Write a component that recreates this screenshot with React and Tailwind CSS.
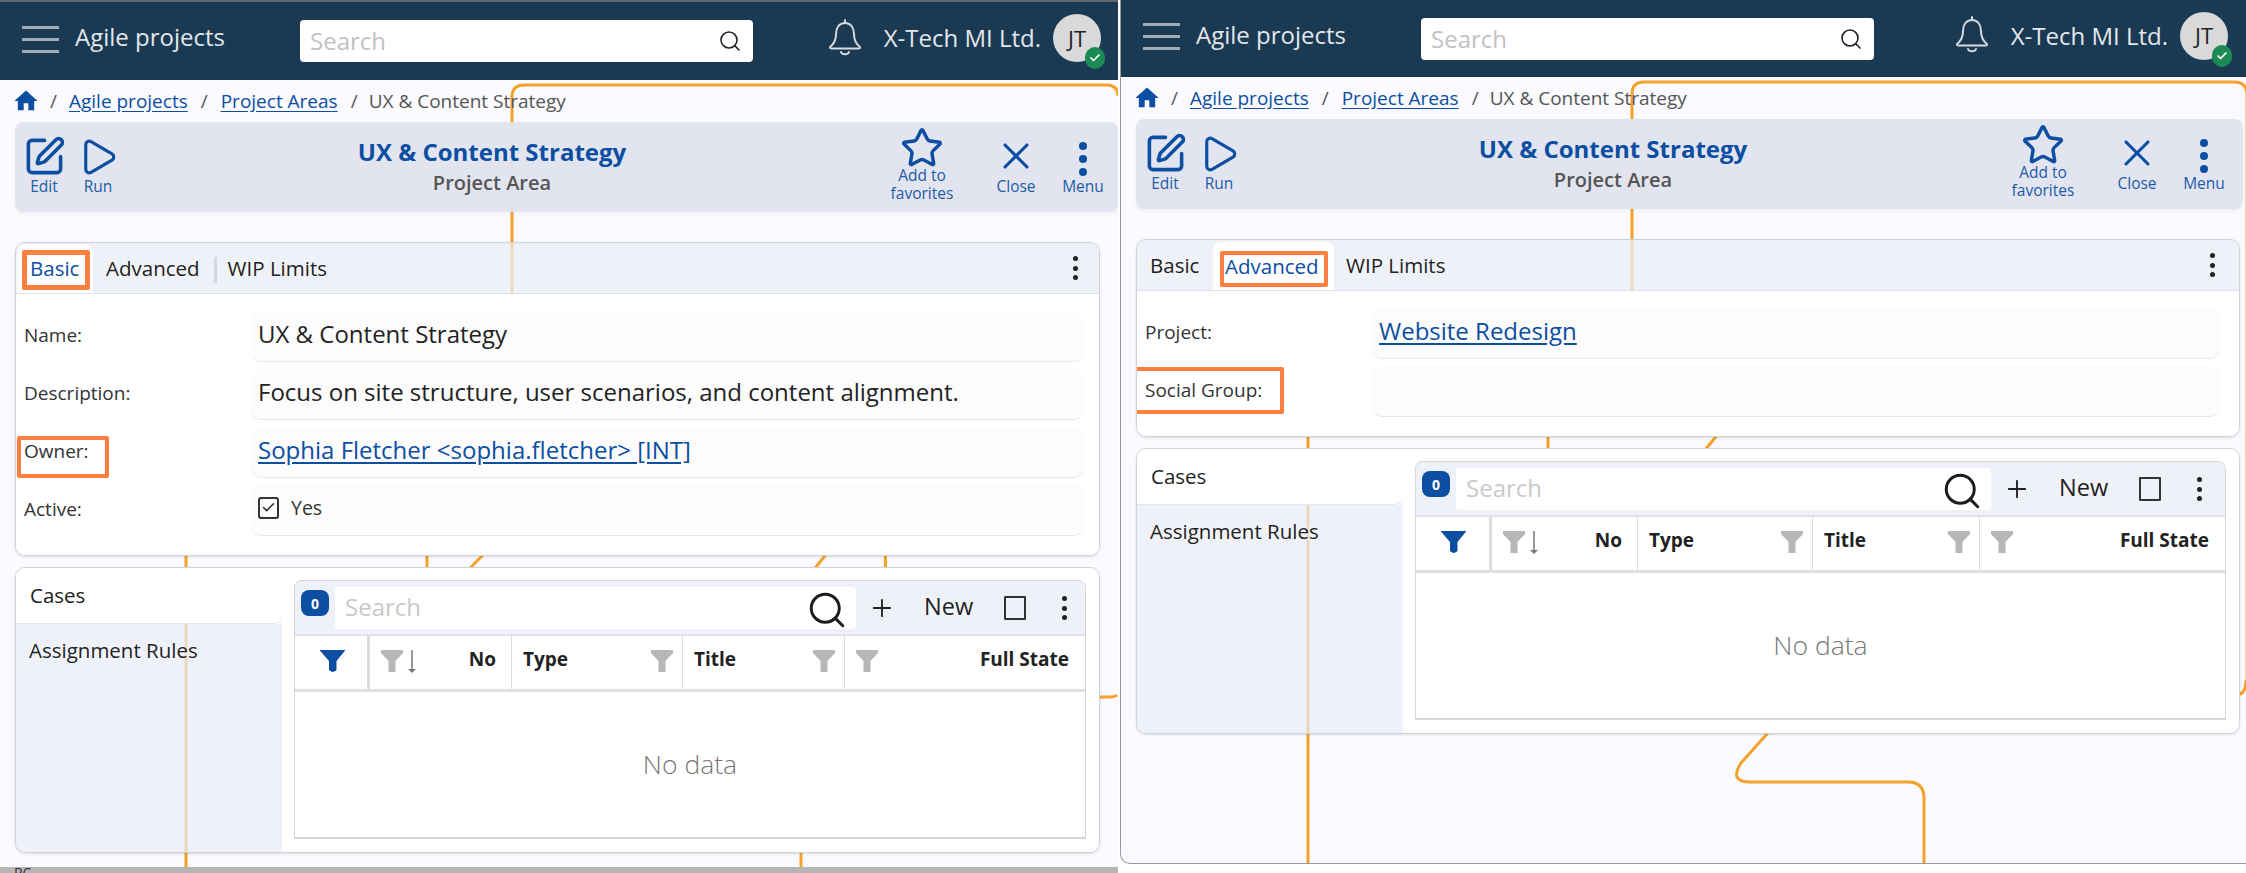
import React from "react";
import { Search, Play, Star, X, Plus, Check, SquarePen } from "lucide-react";
import { MdHome } from "react-icons/md";

const BellIcon = () => (
  <svg width="34" height="37" viewBox="0 0 34 37" fill="none" stroke="#d5dade" strokeWidth="2" strokeLinecap="round" strokeLinejoin="round">
    <path d="M17 1v3M17 4c-6 0-9 5-9 11 0 7-2 10-6 13 0 1 .5 1.500 1.500 1.500h27c1 0 1.500-.5 1.500-1.500-4-3-6-6-6-13 0-6-3-11-9-11z" />
    <path d="M13 33c1 3 7 3 8 0" />
  </svg>
);

const Funnel = ({ color = "#b7b7b7" }) => (
  <svg width="22" height="22" viewBox="0 0 22 22" className="shrink-0">
    <path d="M0 0H22V3L14.500 11V22H7.500V11L0 3Z" fill={color} />
  </svg>
);

const BlueFunnel = () => (
  <svg width="25" height="22" viewBox="0 0 25 22" className="shrink-0">
    <path d="M0 0H25L16 11V20Q12.500 23 9.500 20V11Z" fill="#0b4ea2" stroke="#0b4ea2" strokeLinejoin="round" />
  </svg>
);

const SortArrow = () => (
  <svg width="10" height="24" viewBox="0 0 10 24" className="shrink-0">
    <path d="M5 0V20" stroke="#777" strokeWidth="1.500" />
    <path d="M1 19H9L5 23Z" fill="#777" />
  </svg>
);

const Dots = ({ size = 5, gap = 5, color = "#222" }) => (
  <div className="flex flex-col items-center" style={{ gap }}>
    <span className="rounded-full" style={{ width: size, height: size, background: color }} />
    <span className="rounded-full" style={{ width: size, height: size, background: color }} />
    <span className="rounded-full" style={{ width: size, height: size, background: color }} />
  </div>
);

const Action = ({ icon, label, className, labelClass = "-mt-[1px]" }) => (
  <div className={"flex flex-col items-center text-[15.500px] leading-[18px] text-[#1d5aa8] " + className}>
    <div className="h-[50px] flex items-end justify-center">{icon}</div>
    <div className={"text-center whitespace-pre-line " + labelClass}>{label}</div>
  </div>
);

const Header = ({ h, pr }) => (
  <div className={"relative z-20 shrink-0 flex items-center bg-[#1a3a54] " + h + " " + pr}>
    <div className="ml-[22px] mb-[4px] w-[37px] flex flex-col gap-[9px]">
      <span className="h-[3px] bg-[#a1abb5]" />
      <span className="h-[3px] bg-[#a1abb5]" />
      <span className="h-[3px] bg-[#a1abb5]" />
    </div>
    <div className="ml-[16px] mb-[8px] w-[225px] text-[24px] text-[#e3e7ea]">Agile projects</div>
    <div className="w-[453px] h-[42px] bg-white rounded-[4px] flex items-center pl-[10px] pr-[11px]">
      <span className="flex-1 text-[24px] text-[#c2c2c2]">Search</span>
      <Search size={24} strokeWidth={1.600} color="#222" />
    </div>
    <div className="ml-auto flex items-center">
      <span className="mb-[8px]"><BellIcon /></span>
      <span className="ml-[22px] mb-[6px] text-[24px] text-[#e3e7ea]">X-Tech MI Ltd.</span>
      <div className="relative ml-[12px] mb-[6px] w-[48px] h-[48px] rounded-full bg-[#d9d9d9] flex items-center justify-center text-[22px] text-[#222]">
        JT
        <span className="absolute right-[-4px] bottom-[-7px] w-[20px] h-[22px] rounded-full bg-[#1c8a55] flex items-center justify-center">
          <Check size={12} strokeWidth={3.500} color="#fff" />
        </span>
      </div>
    </div>
  </div>
);

const Toolbar = ({ pr }) => (
  <div className="ml-[15px] h-[90px] flex bg-[#e0e4ef]/95 rounded-[8px] shadow-[0_2px_4px_rgba(0,0,0,0.05)]">
    <div className="w-[100px] shrink-0 flex pl-[11px] gap-[21px] pt-[6px]">
      <Action className="w-[36px]" icon={<SquarePen size={43} strokeWidth={2} color="#0b4ea2" />} label="Edit" />
      <Action className="w-[30px]" icon={<Play size={42} strokeWidth={1.800} color="#0b4ea2" />} label="Run" />
    </div>
    <div className="w-[754px] shrink-0 flex flex-col items-center pt-[14px]">
      <div className="text-[24px] leading-[32px] font-bold text-[#0b4ea2]">UX &amp; Content Strategy</div>
      <div className="text-[20px] leading-[28px] mt-[1px] font-semibold text-[#555]">Project Area</div>
    </div>
    <div className={"ml-auto flex pt-[2px] " + pr}>
      <Action className="w-[72px] -mt-[4px]" labelClass="-mt-[4px]" icon={<Star size={44} strokeWidth={1.900} color="#0b4ea2" />} label={"Add to\nfavorites"} />
      <Action className="w-[52px] ml-[32px] pt-[4px]" icon={<X size={44} strokeWidth={1.700} color="#0b4ea2" />} label="Close" />
      <Action className="w-[50px] ml-[16px] pt-[4px]" icon={<div className="pb-[2px]"><Dots size={8} gap={5} color="#0b4ea2" /></div>} label="Menu" />
    </div>
  </div>
);

const Field = ({ label, children, overlay }) => (
  <div className="flex h-[51px]">
    <div className="relative w-[235px] shrink-0 pl-[8px] flex items-center text-[19px] text-[#333]">
      <span className="mb-[2px]">{label}</span>
      {overlay}
    </div>
    <div className="flex-1 pl-[7px] pb-[5px] flex items-center bg-[#fcfcfd] rounded-[10px] border-b-[1.500px] border-[#e4e7ee] text-[24px] text-[#222]">
      {children}
    </div>
  </div>
);

const Link = ({ children, className = "" }) => (
  <a className={"text-[#0b4ea2] underline underline-offset-[3px] " + className}>{children}</a>
);

const HeadCell = ({ width, children, className = "", border = "border-r-[1.500px]" }) => (
  <div className={"h-full flex items-start pt-[14px] border-[#dcdcdc] " + border + " " + className} style={{ width }}>
    {children}
  </div>
);

const CasesPanel = ({ cols, width, toolsW }) => (
  <div className={"ml-[15px] mt-[11px] h-[286px] flex rounded-[10px] border border-[#cfd2d6] overflow-hidden shadow-[0_1px_3px_rgba(0,0,0,0.12)] " + width}>
    <div className="w-[266px] shrink-0 flex flex-col">
      <div className="h-[56px] shrink-0 bg-white rounded-br-[8px] border-b border-[#e3e6ee] pl-[14px] flex items-center text-[20.500px] text-[#222]">Cases</div>
      <div className="flex-1 bg-[#e8ecf6]/70 pl-[13px] pt-[11px] text-[20.500px] text-[#222] [text-shadow:0_0_8px_#fff]">Assignment Rules</div>
    </div>
    <div className="flex-1 bg-white pl-[12px] pr-[13px] pt-[12px] pb-[13px]">
      <div className="h-full flex flex-col border border-[#d6d6d6] border-b-[2px] rounded-t-[8px] overflow-hidden">
        <div className="h-[55px] shrink-0 bg-[#eef1f8] border-b-[2px] border-[#dfe2e8] flex items-start">
          <span className="ml-[6px] mt-[9px] w-[28px] h-[26px] rounded-[8px] bg-[#0b4ea2] text-white text-[14px] font-bold flex items-center justify-center">0</span>
          <div className="ml-[6px] mt-[6px] flex-1 h-[42px] bg-white rounded-[4px] flex items-center pl-[10px] pr-[8px] text-[24px] text-[#c9c9c9]">
            <span className="flex-1 pb-[3px]">Search</span>
            <Search size={42} strokeWidth={1.700} color="#1c1c1c" className="-mb-[4px]" />
          </div>
          <div className={"shrink-0 flex items-center h-[42px] mt-[6px] pl-[12px] text-[#222] " + toolsW}>
            <Plus size={28} strokeWidth={1.600} />
            <span className="ml-[28px] pb-[3px] text-[23.500px] [text-shadow:0_0_6px_#fff]">New</span>
            <span className="ml-[31px] w-[22px] h-[24px] border-[2px] border-[#333] rounded-[1px]" />
            <span className="ml-[36px]"><Dots size={5} gap={4.500} /></span>
          </div>
        </div>
        <div className="h-[56px] shrink-0 flex border-b-[3px] border-[#dfdfdf] text-[19px] font-bold text-[#222]">
          <HeadCell width={cols[0]} border="border-r-[3px]" className="pl-[25px]"><BlueFunnel /></HeadCell>
          <HeadCell width={cols[1]} className="pl-[11px]">
            <Funnel />
            <span className="ml-[4px]"><SortArrow /></span>
            <span className="ml-auto pr-[15px] leading-[18px]">No</span>
          </HeadCell>
          <HeadCell width={cols[2]} className="pl-[11px] pr-[9px] justify-between">
            <span className="leading-[18px]">Type</span>
            <Funnel />
          </HeadCell>
          <HeadCell width={cols[3]} className="pl-[11px] pr-[9px] justify-between">
            <span className="leading-[18px]">Title</span>
            <Funnel />
          </HeadCell>
          <HeadCell width="auto" border="" className="flex-1 pl-[11px] pr-[16px] justify-between">
            <Funnel />
            <span className="leading-[18px]">Full State</span>
          </HeadCell>
        </div>
        <div className="flex-1 flex items-center justify-center text-[26.500px] font-light text-[#777]">No data</div>
      </div>
    </div>
  </div>
);

const TabBar = ({ children, dots }) => (
  <div className="h-[51px] flex bg-[#e9edf6]/75 border-b border-[#dde0e7] text-[20.500px] text-[#222]">
    <div className="flex-1 flex items-stretch">{children}</div>
    <div className={"flex items-center justify-center [text-shadow:0_0_6px_#fff] " + dots}><Dots size={5} gap={4.500} /></div>
  </div>
);

const Background = ({ className, viewW, paths }) => (
  <svg className={"absolute top-0 pointer-events-none " + className} viewBox={`0 0 ${viewW} 873`} fill="none" stroke="#f4a22a" strokeWidth="3" strokeLinejoin="round">
    {paths.map((d) => <path key={d} d={d} />)}
  </svg>
);

const Breadcrumb = () => (
  <div className="h-[42px] shrink-0 pl-[12px] flex items-center text-[19px] text-[#555]">
    <MdHome size={28} color="#0b4ea2" />
    <span className="ml-[10px]">/</span>
    <Link className="ml-[12px]">Agile projects</Link>
    <span className="ml-[13px]">/</span>
    <Link className="ml-[13px]">Project Areas</Link>
    <span className="ml-[13px]">/</span>
    <span className="ml-[11px]">UX &amp; Content Strategy</span>
  </div>
);

const Highlight = ({ className }) => (
  <span className={"absolute pointer-events-none border-[#ff7f40] rounded-[2px] " + className} />
);

export default function App() {
  return (
    <div className="relative w-[2246px] h-[873px] bg-white overflow-hidden flex [font-family:'Open_Sans',sans-serif]">
      {/* left screenshot */}
      <div className="w-[1120px] shrink-0 h-[873px] flex flex-col">
        <div className="h-[2px] bg-[#5f676d] w-[1118px]" />
        <div className="relative w-[1118px] h-[865px] flex flex-col overflow-hidden bg-[#fafaff] rounded-bl-[10px]">
          <Header h="h-[78px]" pr="pr-[17px]" />
          <div className="relative flex-1 flex flex-col">
            <Background
              className="left-0 -mt-[80px] w-[1118px] h-[873px]"
              viewW={1118}
              paths={[
                "M1118 96Q1118 85 1106 85H524Q512 85 512 97V294",
                "M186 550V873",
                "M427 550V575",
                "M484 554L466 572",
                "M828 552L812 572",
                "M885.500 550V572",
                "M801 845V873",
                "M1098 697H1110Q1115 697 1117 695",
              ]}
            />
            <div className="relative z-10 flex flex-col">
              <Breadcrumb />
              <Toolbar pr="pr-[10px]" />
              <div className="relative ml-[15px] mt-[30px] w-[1085px] rounded-[10px] border border-[#cfd2d6] overflow-hidden shadow-[0_1px_3px_rgba(0,0,0,0.12)]">
                <TabBar dots="w-[48px]">
                  <div className="relative ml-px mt-[1px] w-[76px] pl-[13px] bg-white rounded-t-[8px] flex items-center text-[#0b4ea2]">
                    Basic
                    <Highlight className="left-[5px] right-[3px] top-[6px] bottom-[3px] border-[5px]" />
                  </div>
                  <div className="pl-[13px] flex items-center [text-shadow:0_0_8px_#fff]">Advanced</div>
                  <span className="ml-[14px] mr-[11px] mt-[14px] w-[3px] h-[26px] bg-[#d3d6dc]" />
                  <div className="flex items-center [text-shadow:0_0_8px_#fff]">WIP Limits</div>
                </TabBar>
                <div className="bg-white pt-[17px] pb-[19px] pr-[15px] flex flex-col gap-[7px]">
                  <Field label="Name:">UX &amp; Content Strategy</Field>
                  <Field label="Description:">Focus on site structure, user scenarios, and content alignment.</Field>
                  <Field label="Owner:" overlay={<Highlight className="left-[1px] top-[9px] w-[92px] h-[42px] border-[4px]" />}>
                    <Link>Sophia Fletcher &lt;sophia.fletcher&gt; [INT]</Link>
                  </Field>
                  <Field label="Active:">
                    <span className="w-[21px] h-[22px] rounded-[3px] border-[2px] border-[#333] flex items-center justify-center">
                      <Check size={15} strokeWidth={2.500} color="#333" />
                    </span>
                    <span className="ml-[12px] text-[19.500px] text-[#333]">Yes</span>
                  </Field>
                </div>
              </div>
              <CasesPanel width="w-[1085px]" cols={[75, 142, 171, 162]} toolsW="w-[229px]" />
            </div>
          </div>
        </div>
        <div className="relative w-[1118px] flex-1 bg-[#b5b5b5] overflow-hidden">
          <span className="absolute left-[14px] top-[-1px] text-[14px] leading-[14px] text-[#333]">PC</span>
        </div>
      </div>

      {/* right screenshot */}
      <div className="relative w-[1126px] h-[864px] shrink-0 flex flex-col overflow-hidden bg-[#fafaff] rounded-bl-[10px] border-b border-l border-[#9b9b9b]">
        <Header h="h-[77px]" pr="pr-[18px]" />
        <div className="relative flex-1 flex flex-col">
          <Background
            className="-left-[1121px] -mt-[77px] w-[2246px] h-[873px]"
            viewW={2246}
            paths={[
              "M2246 680Q2246 695 2236 695M2247 690V95Q2247 82 2234 82H1644Q1632 82 1632 94V291",
              "M1308 430V873",
              "M1548 430V455",
              "M1723 428L1705 450",
              "M1775 725L1741 763Q1729 782 1750 782H1908Q1924 782 1924 798V873",
            ]}
          />
          <div className="relative z-10 flex flex-col">
            <Breadcrumb />
            <div className="w-[1122px]"><Toolbar pr="pr-[14px]" /></div>
            <div className="relative ml-[15px] mt-[30px] w-[1104px] rounded-[10px] border border-[#cfd2d6] overflow-hidden shadow-[0_1px_3px_rgba(0,0,0,0.12)]">
              <TabBar dots="w-[54px]">
                <div className="pl-[13px] w-[76px] flex items-center [text-shadow:0_0_8px_#fff]">Basic</div>
                <div className="relative mt-[2px] w-[121px] pl-[12px] bg-white rounded-t-[8px] flex items-center text-[#0b4ea2]">
                  Advanced
                  <Highlight className="left-[7px] right-[6px] top-[9px] bottom-[3px] border-[4.500px]" />
                </div>
                <div className="pl-[12px] flex items-center [text-shadow:0_0_8px_#fff]">WIP Limits</div>
              </TabBar>
              <div className="bg-white pt-[17px] pb-[19px] pr-[19px] flex flex-col gap-[7px]">
                <Field label="Project:"><Link>Website Redesign</Link></Field>
                <Field label="Social Group:" overlay={<Highlight className="-left-[4px] top-[1px] w-[151px] h-[47px] border-[4.500px]" />} />
              </div>
            </div>
            <CasesPanel width="w-[1104px]" cols={[76, 146, 175, 167]} toolsW="w-[234px]" />
          </div>
        </div>
      </div>
    </div>
  );
}
